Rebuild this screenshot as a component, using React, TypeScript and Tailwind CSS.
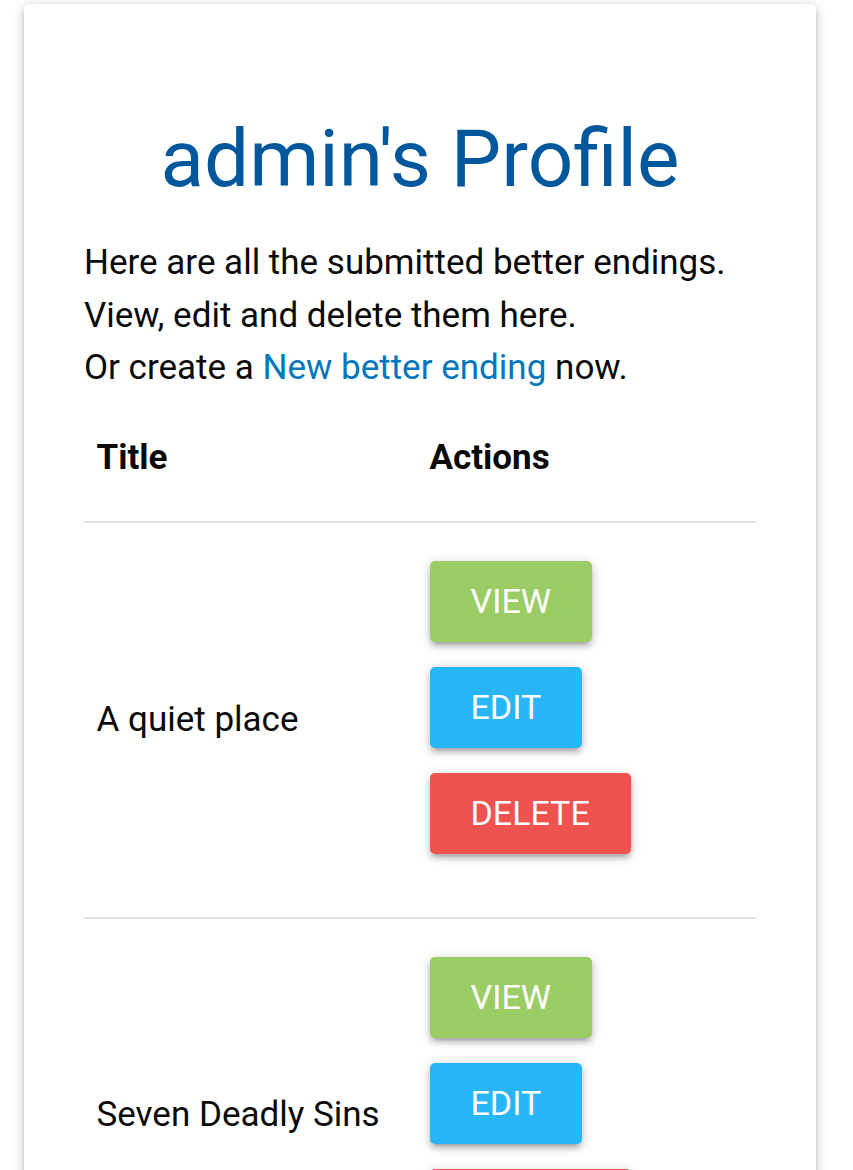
import React from "react"

type Ending = { id: number; title: string }

const endings: Ending[] = [
  { id: 1, title: "A quiet place" },
  { id: 2, title: "Seven Deadly Sins" },
]

function ActionButton({ label, color }: { label: string; color: string }) {
  return (
    <div>
      <a
        href="#"
        className={`mb-[25px] inline-block h-[81px] rounded-[5px] px-[41px] text-[34px] leading-[81px] text-white uppercase shadow-[0_5px_5px_0_rgba(0,0,0,0.14),0_7px_2px_-5px_rgba(0,0,0,0.12),0_2px_12px_0_rgba(0,0,0,0.2)] ${color}`}
      >
        {label}
      </a>
    </div>
  )
}

export default function App() {
  return (
    <div className="min-h-[1170px] bg-white pt-[4px] font-['Roboto',sans-serif] text-[#0a0a0a]">
      <div className="ml-[24px] w-[792px] rounded-[5px] bg-white px-[60px] pt-[60px] pb-[40px] shadow-[0_5px_5px_0_rgba(0,0,0,0.14),0_7px_2px_-5px_rgba(0,0,0,0.12),0_2px_12px_0_rgba(0,0,0,0.2)]">
        {/* Heading */}
        <h4 className="mt-[51px] mb-[34px] text-center text-[80px] leading-[88px] text-[#01579b]">
          admin's Profile
        </h4>

        <p className="text-[35px] leading-[52.5px]">
          Here are all the submitted better endings.
          <br />
          View, edit and delete them here.
          <br />
          Or create a{" "}
          <a href="#" className="text-[#0277bd]">
            New better ending
          </a>{" "}
          now.
        </p>

        {/* Endings table */}
        <table className="w-full border-collapse text-[35px] leading-[52.5px]">
          <thead>
            <tr className="border-b-2 border-[#e0e0e0]">
              <th className="w-[333px] px-[12.5px] pt-[37px] pb-[37px] text-left font-bold">Title</th>
              <th className="px-[12.5px] pt-[37px] pb-[37px] text-left font-bold">Actions</th>
            </tr>
          </thead>
          <tbody>
            {endings.map((e) => (
              <tr key={e.id} className="border-b-2 border-[#e0e0e0]">
                <td className="px-[12.5px] py-[37.5px] align-middle">{e.title}</td>
                <td className="px-[12.5px] pt-[38px] pb-[37.5px] align-middle">
                  <ActionButton label="View" color="bg-[#9ccc65]" />
                  <ActionButton label="Edit" color="bg-[#29b6f6]" />
                  <ActionButton label="Delete" color="bg-[#ef5350]" />
                </td>
              </tr>
            ))}
          </tbody>
        </table>
      </div>
    </div>
  )
}
